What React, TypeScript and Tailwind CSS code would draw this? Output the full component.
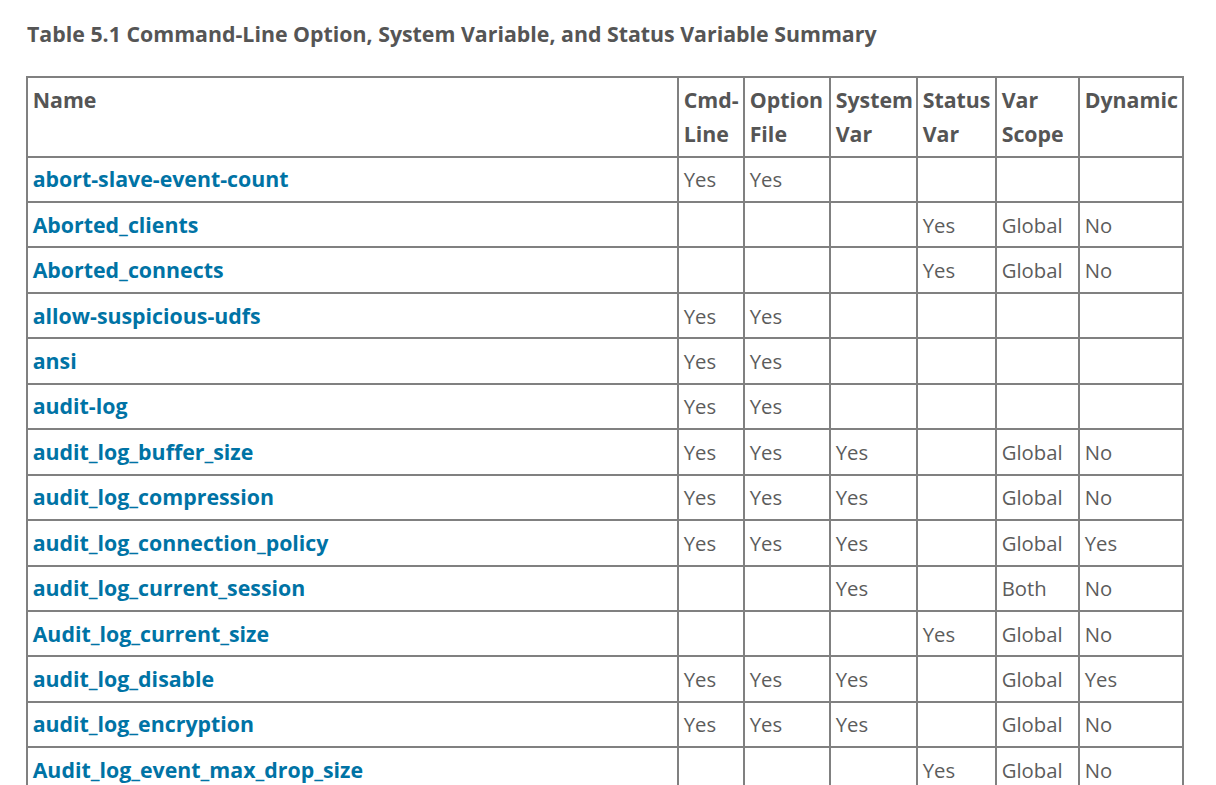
import React from "react";

type Row = {
  name: string;
  cmd?: boolean;
  opt?: boolean;
  sys?: boolean;
  status?: boolean;
  scope?: string;
  dynamic?: string;
};

const rows: Row[] = [
  { name: "abort-slave-event-count", cmd: true, opt: true },
  { name: "Aborted_clients", status: true, scope: "Global", dynamic: "No" },
  { name: "Aborted_connects", status: true, scope: "Global", dynamic: "No" },
  { name: "allow-suspicious-udfs", cmd: true, opt: true },
  { name: "ansi", cmd: true, opt: true },
  { name: "audit-log", cmd: true, opt: true },
  { name: "audit_log_buffer_size", cmd: true, opt: true, sys: true, scope: "Global", dynamic: "No" },
  { name: "audit_log_compression", cmd: true, opt: true, sys: true, scope: "Global", dynamic: "No" },
  { name: "audit_log_connection_policy", cmd: true, opt: true, sys: true, scope: "Global", dynamic: "Yes" },
  { name: "audit_log_current_session", sys: true, scope: "Both", dynamic: "No" },
  { name: "Audit_log_current_size", status: true, scope: "Global", dynamic: "No" },
  { name: "audit_log_disable", cmd: true, opt: true, sys: true, scope: "Global", dynamic: "Yes" },
  { name: "audit_log_encryption", cmd: true, opt: true, sys: true, scope: "Global", dynamic: "No" },
  { name: "Audit_log_event_max_drop_size", status: true, scope: "Global", dynamic: "No" },
];

const th = "border-2 border-[#808080] px-[4.67px] py-[4.67px] text-left align-top font-bold text-[#555555]";
const td = "border-2 border-[#808080] px-[4.67px] py-[4.67px] align-top";

function Cell({ value }: { value?: string }) {
  return <td className={td + " text-[20.3px] text-[#5c5c5c]"}>{value ?? ""}</td>;
}

export default function App() {
  return (
    <div
      className="h-[785px] overflow-hidden bg-white pl-[26px] pr-[32px] pt-[17px]"
      style={{ fontFamily: '"Open Sans", "Liberation Sans", sans-serif' }}
    >
      <h3 className="ml-[1px] text-[21.33px] font-bold leading-[34px] text-[#555555]">
        Table 5.1 Command-Line Option, System Variable, and Status Variable Summary
      </h3>
      <table className="mt-[25px] w-[1158px] table-fixed border-collapse text-[21.33px] leading-[34.13px] text-[#555555]">
        <colgroup>
          <col className="w-[651px]" />
          <col className="w-[66px]" />
          <col className="w-[86px]" />
          <col className="w-[87px]" />
          <col className="w-[79px]" />
          <col className="w-[83px]" />
          <col className="w-[104px]" />
        </colgroup>
        <thead>
          <tr>
            <th className={th}>Name</th>
            <th className={th}>Cmd-Line</th>
            <th className={th}>Option File</th>
            <th className={th}>System Var</th>
            <th className={th}>Status Var</th>
            <th className={th}>Var Scope</th>
            <th className={th}>Dynamic</th>
          </tr>
        </thead>
        <tbody>
          {rows.map((r, i) => (
            <tr key={i}>
              <td className={td}>
                <a href="#" className="font-bold text-[#0073a5]">
                  {r.name}
                </a>
              </td>
              <Cell value={r.cmd ? "Yes" : undefined} />
              <Cell value={r.opt ? "Yes" : undefined} />
              <Cell value={r.sys ? "Yes" : undefined} />
              <Cell value={r.status ? "Yes" : undefined} />
              <Cell value={r.scope} />
              <Cell value={r.dynamic} />
            </tr>
          ))}
        </tbody>
      </table>
    </div>
  );
}
